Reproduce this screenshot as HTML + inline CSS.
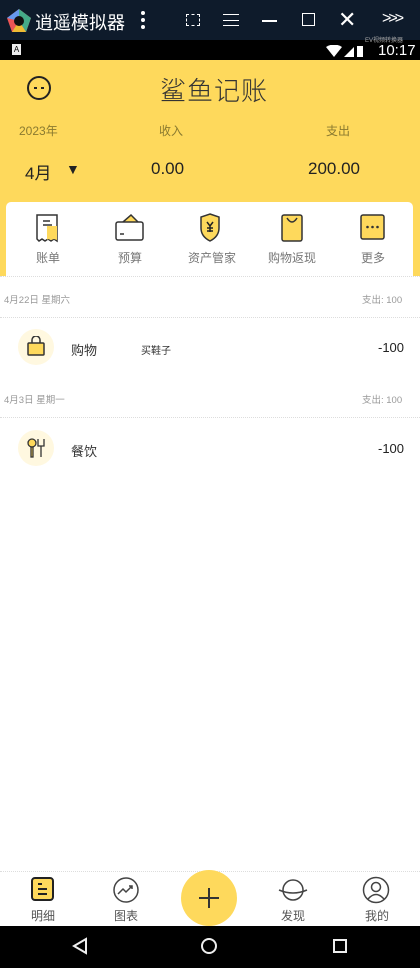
<!DOCTYPE html>
<html><head><meta charset="utf-8"><style>
*{margin:0;padding:0;box-sizing:border-box}
body{width:420px;height:968px;overflow:hidden;background:#fff;font-family:"Liberation Sans","Noto Sans CJK SC",sans-serif;position:relative}
.a{position:absolute}
</style></head><body>
<div class="a" style="left:0;top:0;width:420px;height:40px;background:#0e1b2b"></div>
<svg class="a" style="left:6px;top:8px" width="26" height="26" viewBox="0 0 26 26"><polygon points="13,1 25,10 20,24 6,24 1,10" fill="#e55"/><polygon points="13,1 25,10 20,24 13,13" fill="#4a8"/><polygon points="13,1 1,10 13,13" fill="#69e"/><polygon points="6,24 20,24 13,13" fill="#eb3"/><circle cx="13" cy="13" r="5" fill="#111"/></svg>
<div class="a" style="left:35px;top:9px;color:#fff;font-size:18px">逍遥模拟器</div>
<div class="a" style="left:141px;top:11px;width:4px;height:18px;border-left:4px dotted #fff"></div>
<div class="a" style="left:186px;top:14px;width:14px;height:12px;border:1.5px dashed #fff"></div>
<div class="a" style="left:223px;top:14px;width:16px;height:12px;border-top:1.5px solid #fff;border-bottom:1.5px solid #fff"></div>
<div class="a" style="left:223px;top:19.5px;width:16px;height:1.5px;background:#fff"></div>
<div class="a" style="left:262px;top:20px;width:15px;height:1.5px;background:#fff"></div>
<div class="a" style="left:302px;top:13px;width:13px;height:13px;border:1.5px solid #fff"></div>
<div class="a" style="left:338px;top:7px;color:#fff;font-size:22px">✕</div>
<div class="a" style="left:382px;top:10px;color:#fff;font-size:16px;letter-spacing:-3px">&gt;&gt;&gt;</div>
<div class="a" style="left:0;top:40px;width:420px;height:20px;background:#000"></div>
<div class="a" style="left:12px;top:44px;width:9px;height:11px;background:#eee;font-size:8px;text-align:center;line-height:11px">A</div>
<div class="a" style="left:365px;top:35px;color:#aaa;font-size:6px">EV视频转换器</div>
<svg class="a" style="left:326px;top:45px" width="38" height="12"><path d="M0,2 Q8,-3 16,2 L8,12Z" fill="#fff"/><path d="M18,12 L28,2 L28,12Z" fill="#fff"/><rect x="31" y="1" width="6" height="11" fill="#fff"/></svg>
<div class="a" style="left:378px;top:42px;color:#fff;font-size:15px">10:17</div>
<div class="a" style="left:0;top:60px;width:420px;height:216px;background:#fed95c"></div>
<svg class="a" style="left:26px;top:75px" width="26" height="26"><circle cx="13" cy="13" r="11" fill="none" stroke="#222" stroke-width="2"/><path d="M8,13h3M15,13h3" stroke="#222" stroke-width="2"/></svg>
<div class="a" style="left:160px;top:71px;font-size:26px;color:#333;letter-spacing:1px;font-weight:300">鲨鱼记账</div>
<div class="a" style="left:19px;top:122px;font-size:12px;color:#8a7a30">2023年</div>
<div class="a" style="left:159px;top:122px;font-size:12px;color:#8a7a30">收入</div>
<div class="a" style="left:326px;top:122px;font-size:12px;color:#8a7a30">支出</div>
<div class="a" style="left:25px;top:159px;font-size:17px;color:#222">4月</div>
<div class="a" style="left:66px;top:161px;font-size:14px;color:#222">▼</div>
<div class="a" style="left:151px;top:159px;font-size:17px;color:#222">0.00</div>
<div class="a" style="left:308px;top:159px;font-size:17px;color:#222">200.00</div>
<div class="a" style="left:6px;top:202px;width:407px;height:74px;background:#fff;border-radius:5px 5px 0 0"></div>
<svg class="a" style="left:0;top:212px" width="420" height="32" fill="none" stroke="#333" stroke-width="1.5">
<path d="M37,3h20v26l-3,-2-3,2-3,-2-3,2-3,-2-3,2-2,-2z" fill="#fff"/><path d="M47,14h10v14l-3,-1-3,1-3,-1-1,1z" fill="#fed95c" stroke="none"/><path d="M43,9h7M43,13h9"/>
<path d="M123,10l8,-7 7,7" fill="#fed95c"/><rect x="116" y="10" width="27" height="18" rx="2"/><path d="M120,22h4"/>
<path d="M210,2l9,3v11c0,7-5,11-9,13c-4-2-9-6-9-13v-11z" fill="#fed95c"/><path d="M207,10l3,4 3,-4M210,14v6M207,16h6M207,19h6" stroke="#222"/>
<rect x="282" y="3" width="20" height="26" rx="2" fill="#fed95c"/><path d="M287,6q5,8 10,0"/>
<rect x="361" y="3" width="23" height="24" rx="2" fill="#fed95c"/><circle cx="367.5" cy="15" r="1.3" fill="#333" stroke="none"/><circle cx="372.5" cy="15" r="1.3" fill="#333" stroke="none"/><circle cx="377.5" cy="15" r="1.3" fill="#333" stroke="none"/>
</svg>
<div class="a" style="left:0;top:249px;width:420px;display:flex;font-size:12px;color:#777">
<div style="position:absolute;left:36px">账单</div><div style="position:absolute;left:118px">预算</div><div style="position:absolute;left:188px">资产管家</div><div style="position:absolute;left:268px">购物返现</div><div style="position:absolute;left:361px">更多</div></div>
<div class="a" style="left:0;top:276px;width:420px;border-top:1px dotted #ddd"></div>
<div class="a" style="left:4px;top:292px;font-size:9.5px;color:#999">4月22日 星期六</div>
<div class="a" style="left:362px;top:292px;font-size:9.5px;color:#999">支出: 100</div>
<div class="a" style="left:0;top:317px;width:420px;border-top:1px dotted #ddd"></div>
<div class="a" style="left:18px;top:329px;width:36px;height:36px;border-radius:50%;background:#fff8e0"></div>
<svg class="a" style="left:25px;top:336px" width="22" height="22"><path d="M7,7v-3a4,4 0 0 1 8,0v3" fill="none" stroke="#333" stroke-width="1.5"/><rect x="3" y="7" width="16" height="12" rx="1" fill="#fed95c" stroke="#333" stroke-width="1.5"/></svg>
<div class="a" style="left:71px;top:340px;font-size:13px;color:#333">购物</div>
<div class="a" style="left:141px;top:342px;font-size:10px;color:#333">买鞋子</div>
<div class="a" style="left:378px;top:340px;font-size:13px;color:#222">-100</div>
<div class="a" style="left:4px;top:392px;font-size:9.5px;color:#999">4月3日 星期一</div>
<div class="a" style="left:362px;top:392px;font-size:9.5px;color:#999">支出: 100</div>
<div class="a" style="left:0;top:417px;width:420px;border-top:1px dotted #ddd"></div>
<div class="a" style="left:18px;top:430px;width:36px;height:36px;border-radius:50%;background:#fff8e0"></div>
<svg class="a" style="left:25px;top:437px" width="22" height="22" stroke="#333" stroke-width="1.3" fill="#fed95c"><circle cx="7" cy="6" r="4"/><rect x="6" y="10" width="2" height="10"/><path d="M13,2v7h6v-7M16,9v11" fill="none"/></svg>
<div class="a" style="left:71px;top:441px;font-size:13px;color:#333">餐饮</div>
<div class="a" style="left:378px;top:441px;font-size:13px;color:#222">-100</div>
<div class="a" style="left:0;top:871px;width:420px;border-top:1px dotted #ddd"></div>
<svg class="a" style="left:0;top:875px" width="420" height="30" fill="none" stroke="#444" stroke-width="1.5">
<rect x="32" y="3" width="21" height="22" rx="3" fill="#fed95c" stroke="#222" stroke-width="2"/><path d="M38,9h4M38,14h9M38,19h9" stroke="#222" stroke-width="2"/>
<circle cx="126" cy="15" r="12"/><path d="M118,19l5,-5 3,3 6,-6M129,11h3v3"/>
<circle cx="293" cy="15" r="10"/><path d="M279,15q14,6 28,0"/>
<circle cx="376" cy="15" r="12.5"/><circle cx="376" cy="12" r="4.5"/><path d="M368,24q8,-9 16,0"/>
</svg>
<div class="a" style="left:181px;top:870px;width:56px;height:56px;border-radius:50%;background:#fed95c"></div>
<div class="a" style="left:199px;top:897px;width:20px;height:1.5px;background:#333"></div>
<div class="a" style="left:208.3px;top:888px;width:1.5px;height:20px;background:#333"></div>
<div class="a" style="left:31px;top:907px;font-size:12px;color:#555">明细</div>
<div class="a" style="left:114px;top:907px;font-size:12px;color:#555">图表</div>
<div class="a" style="left:281px;top:907px;font-size:12px;color:#555">发现</div>
<div class="a" style="left:365px;top:907px;font-size:12px;color:#555">我的</div>
<div class="a" style="left:0;top:926px;width:420px;height:42px;background:#000"></div>
<svg class="a" style="left:0;top:926px" width="420" height="42" fill="none" stroke="#eee" stroke-width="2"><path d="M86,13v14l-12,-7z"/><circle cx="209" cy="20" r="7"/><rect x="334" y="14" width="12" height="12"/></svg>
</body></html>
